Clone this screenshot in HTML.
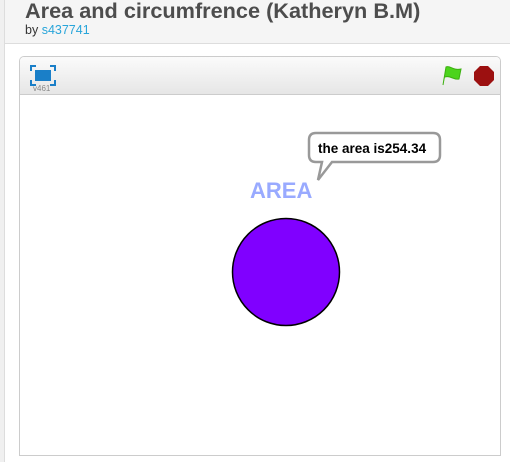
<!DOCTYPE html>
<html><head><meta charset="utf-8"><style>
*{margin:0;padding:0;box-sizing:border-box}
body{width:510px;height:462px;overflow:hidden;background:#fff;font-family:"Liberation Sans",Arial,sans-serif;position:relative}
.strip{position:absolute;left:0;top:0;width:5px;height:462px;background:#f0f0f0;border-right:1px solid #ddd}
.hdr{position:absolute;left:5px;top:0;width:505px;height:44px;background:#f5f5f5;border-bottom:1px solid #ddd}
h1{position:absolute;left:25px;top:-2px;font-size:21.7px;font-weight:bold;color:#4d4d4d;white-space:nowrap}
.by{position:absolute;left:25px;top:23px;font-size:12.5px;color:#333}
.by span{color:#28a5da}
.box{position:absolute;left:19px;top:56px;width:482px;height:400px;border:1px solid #ccc;border-radius:5px 5px 0 0;background:#fff;overflow:hidden}
.tb{position:absolute;left:0;top:0;width:480px;height:38px;background:linear-gradient(#fbfbfb,#e6e6e6);border-bottom:1px solid #ccc}
.ver{position:absolute;left:13px;top:27px;font-size:8px;color:#888}
</style></head><body>
<div class="strip"></div>
<div class="hdr"></div>
<h1>Area and circumfrence (Katheryn B.M)</h1>
<div class="by">by <span>s437741</span></div>
<div class="box">
<div class="tb">
<svg style="position:absolute;left:10px;top:8px" width="26" height="21" viewBox="0 0 26 21">
<path d="M1 6V1H6M20 1H25V6M25 15V20H20M6 20H1V15" fill="none" stroke="#1a7fc8" stroke-width="2"/>
<rect x="5" y="5" width="16" height="11" fill="#1a7fc8"/>
</svg>
<div class="ver">v461</div>
<svg style="position:absolute;left:421px;top:9px" width="22" height="20" viewBox="0 0 22 20">
<path d="M2 19L5 1C9 -1 12 5 20 3L18 13C12 14 9 9 4 11" fill="#4cd41c" stroke="#3cb010" stroke-width="1"/>
</svg>
<svg style="position:absolute;left:453px;top:8px" width="22" height="22" viewBox="0 0 22 22">
<polygon points="7,1 15,1 21,7 21,15 15,21 7,21 1,15 1,7" fill="#9c1010"/>
</svg>
</div>
</div>
<svg style="position:absolute;left:0;top:0" width="510" height="462">
<path d="M320 133H433Q440 133 440 140V155Q440 162 433 162H332L318 180L322 162H316Q309 162 309 155V140Q309 133 316 133Z" fill="#fff" stroke="#999" stroke-width="2.5"/>
<text x="318" y="153" font-family="Liberation Sans,Arial,sans-serif" font-size="13.5" font-weight="bold" fill="#000">the area is254.34</text>
<text x="250" y="198" font-family="Liberation Sans,Arial,sans-serif" font-size="22" font-weight="bold" fill="#99aaff">AREA</text>
<circle cx="286" cy="272" r="53.5" fill="#8000ff" stroke="#000" stroke-width="1.5"/>
</svg>
</body></html>
